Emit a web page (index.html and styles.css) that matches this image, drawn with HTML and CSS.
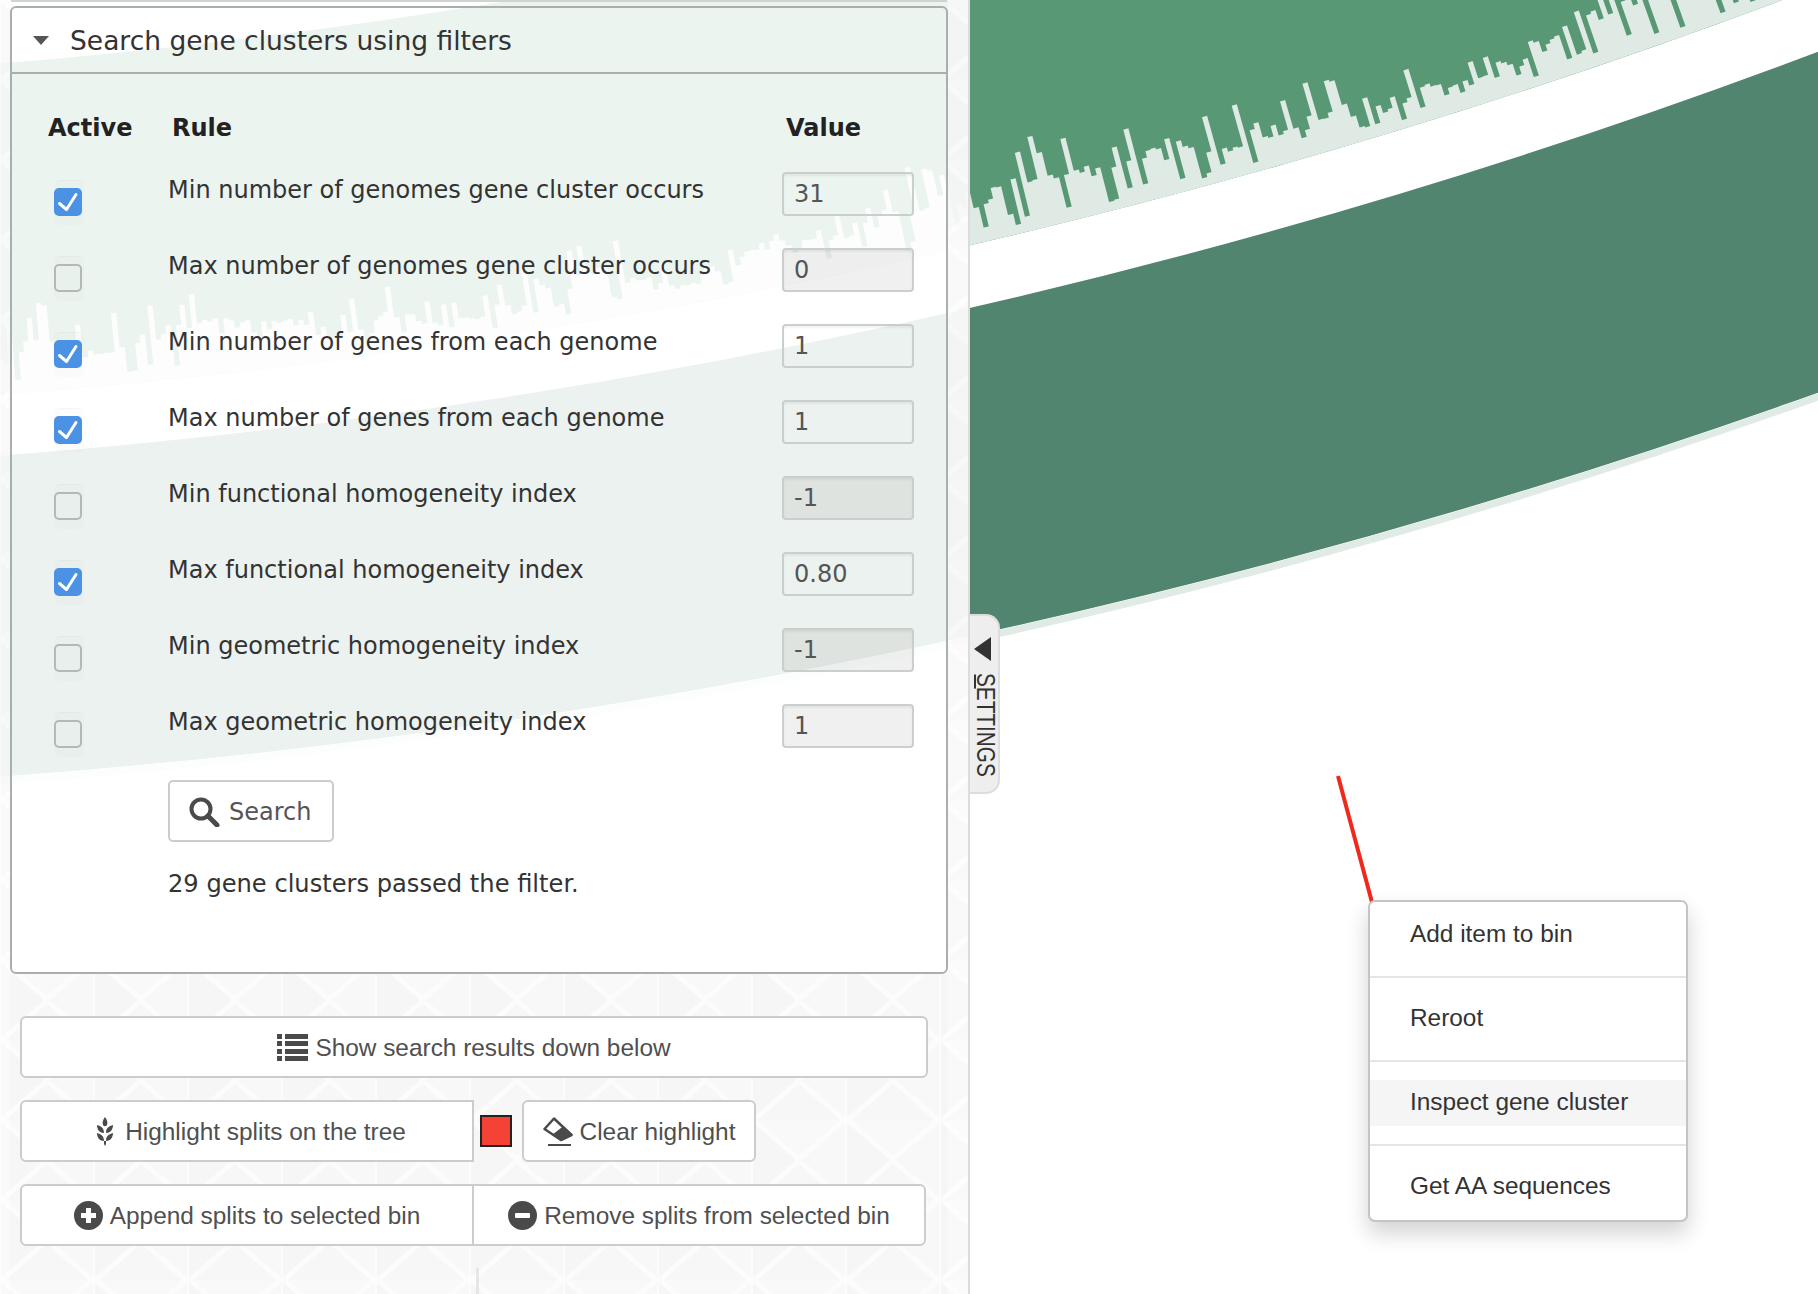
FILE: index.html
```html
<!DOCTYPE html>
<html lang="en">
<head>
  <meta charset="UTF-8" />
  <title>Search gene clusters</title>
  <link rel="stylesheet" href="styles.css">
</head>
<body>
  <!-- tree drawing, the sidebar sits on top of it -->
  <svg class="tree" width="1818" height="1294" viewBox="0 0 1818 1294">
    <circle class="band-a" cx="-503" cy="-6101" r="6350" />
    <path id="hist" class="hist" d="" />
    <circle class="band-b" cx="-503" cy="-6101" r="6736" />
    <circle class="band-b-edge" cx="-503" cy="-6101" r="6900" />
    <line class="branch" x1="1338" y1="776" x2="1373" y2="906" />
  </svg>

  <div class="sidebar">
    <svg class="pattern" width="968" height="1294">
      <defs>
        <pattern id="tri" width="94" height="80" patternUnits="userSpaceOnUse">
          <rect width="94" height="80" fill="#fcfcfc" />
          <polygon points="1,3 44,40 1,77" fill="#f6f6f6" />
          <polygon points="93,3 50,40 93,77" fill="#f8f8f8" />
          <polygon points="6,0 88,0 47,36" fill="#f9f9f9" />
          <polygon points="6,80 88,80 47,44" fill="#f7f7f7" />
        </pattern>
      </defs>
      <rect x="0" y="0" width="10" height="1294" fill="url(#tri)" opacity="0.7" />
      <rect x="948" y="0" width="20" height="1294" fill="url(#tri)" opacity="0.7" />
      <rect x="10" y="974" width="938" height="320" fill="url(#tri)" />
      <rect x="476" y="1268" width="3" height="26" fill="#e6e6e6" />
    </svg>

    <div class="prev-edge"></div>

    <div class="panel">
      <div class="panel-head">
        <span class="caret"></span>
        <span>Search gene clusters using filters</span>
      </div>

      <div class="rules-head">
        <span class="col-active">Active</span>
        <span class="col-rule">Rule</span>
        <span class="col-value">Value</span>
      </div>

      <div class="rule">
        <span class="check on"><svg viewBox="0 0 28 28"><path d="M5.5 15.5l7 6L22 6.5" /></svg></span>
        <label>Min number of genomes gene cluster occurs</label>
        <input type="text" value="31">
      </div>
      <div class="rule">
        <span class="check"></span>
        <label>Max number of genomes gene cluster occurs</label>
        <input type="text" value="0" disabled>
      </div>
      <div class="rule">
        <span class="check on"><svg viewBox="0 0 28 28"><path d="M5.5 15.5l7 6L22 6.5" /></svg></span>
        <label>Min number of genes from each genome</label>
        <input type="text" value="1">
      </div>
      <div class="rule">
        <span class="check on"><svg viewBox="0 0 28 28"><path d="M5.5 15.5l7 6L22 6.5" /></svg></span>
        <label>Max number of genes from each genome</label>
        <input type="text" value="1">
      </div>
      <div class="rule">
        <span class="check"></span>
        <label>Min functional homogeneity index</label>
        <input type="text" value="-1" disabled>
      </div>
      <div class="rule">
        <span class="check on"><svg viewBox="0 0 28 28"><path d="M5.5 15.5l7 6L22 6.5" /></svg></span>
        <label>Max functional homogeneity index</label>
        <input type="text" value="0.80">
      </div>
      <div class="rule">
        <span class="check"></span>
        <label>Min geometric homogeneity index</label>
        <input type="text" value="-1" disabled>
      </div>
      <div class="rule">
        <span class="check"></span>
        <label>Max geometric homogeneity index</label>
        <input type="text" value="1" disabled>
      </div>

      <button class="btn-search">
        <svg class="ico" width="31" height="30" viewBox="0 0 31 30"><circle cx="12" cy="12" r="9.5" fill="none" stroke="#4a4a4a" stroke-width="4" /><path d="M19 19l9 9" stroke="#4a4a4a" stroke-width="5" stroke-linecap="round" /></svg>
        Search
      </button>
      <p class="status">29 gene clusters passed the filter.</p>
    </div>

    <div class="actions">
      <button class="btn btn-wide">
        <svg width="31" height="27" viewBox="0 0 31 27"><path d="M0 0h5v5H0zM8 0h23v5H8zM0 7h5v5H0zM8 7h23v5H8zM0 15h5v5H0zM8 15h23v5H8zM0 22h5v5H0zM8 22h23v5H8z" fill="#4a4a4a" /></svg>
        Show search results down below
      </button>

      <div class="btn-row">
        <button class="btn btn-left btn-highlight">
          <svg width="26" height="29" viewBox="-4 0 26 29"><path d="M9 0c2 3 3 5 2 8-.5 1.500-3.500 1.500-4 0C6 5 7 3 9 0zM1 8c4 1 7 3 7 8-4 0-7-3-7-8zM17 8c-4 1-7 3-7 8 4 0 7-3 7-8zM1 16c4 1 7 3 7 8-4 0-7-3-7-8zM17 16c-4 1-7 3-7 8 4 0 7-3 7-8zM8 24h2v3l-1 2-1-2z" fill="#4a4a4a" /></svg>
          Highlight splits on the tree
        </button>
        <span class="swatch"></span>
        <button class="btn btn-clear">
          <svg width="30" height="29" viewBox="0 0 30 29"><path d="M1.500 12L11 1.500 28.500 18 18 23z" fill="#fff" stroke="#4a4a4a" stroke-width="2.500" stroke-linejoin="round" /><path d="M20.500 9L30 18l-12 6-9-6z" fill="#4a4a4a" /><rect x="5" y="27" width="23" height="2" fill="#4a4a4a" /></svg>
          Clear highlight
        </button>
      </div>

      <div class="btn-row">
        <button class="btn btn-left">
          <svg width="29" height="29" viewBox="0 0 29 29"><circle cx="14.500" cy="14.500" r="14.500" fill="#4a4a4a" /><path d="M12 7h5v5h5v5h-5v5h-5v-5H7v-5h5z" fill="#fff" /></svg>
          Append splits to selected bin
        </button>
        <button class="btn btn-right">
          <svg width="29" height="29" viewBox="0 0 29 29"><circle cx="14.500" cy="14.500" r="14.500" fill="#4a4a4a" /><rect x="7" y="12" width="15" height="5" rx="1" fill="#fff" /></svg>
          Remove splits from selected bin
        </button>
      </div>
    </div>
  </div>

  <div class="settings-tab">
    <span class="arrow"></span>
    <span class="settings-text">SETTINGS</span>
  </div>

  <ul class="menu">
    <li><a>Add item to bin</a></li>
    <li class="divider"></li>
    <li><a>Reroot</a></li>
    <li class="divider"></li>
    <li><a class="hover">Inspect gene cluster</a></li>
    <li class="divider"></li>
    <li><a>Get AA sequences</a></li>
  </ul>

  <script src="script.js"></script>
</body>
</html>
```

FILE: styles.css
```css
body {
  margin: 0;
  width: 1818px;
  height: 1294px;
  overflow: hidden;
  background: white;
  position: relative;
  font-family: "DejaVu Sans", Verdana, sans-serif;
  color: #333;
}

/* tree */
.tree {
  position: absolute;
  left: 0;
  top: 0;
}
.band-a {
  fill: none;
  stroke: #589875;
  stroke-width: 330;
}
.hist {
  fill: #deeae3;
}
.band-b {
  fill: none;
  stroke: #518570;
  stroke-width: 320;
}
.band-b-edge {
  fill: none;
  stroke: #e0ebe6;
  stroke-width: 7;
}
.branch {
  stroke: #ee2a1e;
  stroke-width: 4;
}

/* sidebar */
.sidebar {
  position: relative;
  width: 968px;
  height: 1294px;
  border-right: 2px solid #dcdcdc;
  background: rgba(255, 255, 255, 0.89);
}
.pattern {
  position: absolute;
  left: 0;
  top: 0;
}
.prev-edge {
  position: relative;
  margin-left: 11px;
  width: 936px;
  height: 2px;
  background: #cfd3d1;
}
.panel {
  position: relative;
  box-sizing: border-box;
  margin: 4px 0 0 10px;
  width: 938px;
  height: 968px;
  border: 2px solid #a9afad;
  border-radius: 6px;
}
.panel-head {
  display: flex;
  align-items: center;
  height: 64px;
  border-bottom: 2px solid #a9afad;
  font-size: 26.5px;
}
.caret {
  width: 0;
  height: 0;
  margin: 0 21px 0 21px;
  border-left: 8px solid transparent;
  border-right: 8px solid transparent;
  border-top: 9px solid #555;
}
.rules-head {
  position: relative;
  height: 99px;
  font-size: 24px;
  font-weight: bold;
  color: #222;
}
.rules-head span {
  position: absolute;
  top: 40px;
}
.col-active {
  left: 36px;
}
.col-rule {
  left: 160px;
}
.col-value {
  left: 774px;
}

.rule {
  display: grid;
  grid-template-columns: 156px 1fr 132px;
  height: 76px;
  padding-right: 32px;
  font-size: 24px;
}
.rule label {
  margin-top: 1px;
  line-height: 32px;
}
.rule input {
  box-sizing: border-box;
  width: 132px;
  height: 44px;
  margin: -1px 0 0;
  padding: 0 0 0 10px;
  border: 2px solid #c9cfcd;
  border-radius: 4px;
  background: transparent;
  box-shadow: inset 0 2px 2px rgba(0, 0, 0, 0.05);
  font-family: inherit;
  font-size: 24px;
  color: #555;
}
.rule input:disabled {
  background: rgba(0, 0, 0, 0.06);
  color: #555;
}
.check {
  position: relative;
  box-sizing: border-box;
  width: 28px;
  height: 28px;
  margin: 15px 0 0 42px;
  border: 2px solid #b6bcba;
  border-radius: 5px;
}
.check::before {
  content: "";
  position: absolute;
  left: -2px;
  top: -10px;
  width: 30px;
  height: 44px;
  border-radius: 6px;
  background: rgba(0, 0, 0, 0.012);
  border-top: 1px solid rgba(0, 0, 0, 0.03);
}
.check.on {
  border: none;
  background: #4c94e8;
}
.check.on::before {
  left: 0;
  top: -8px;
}
.check svg {
  position: relative;
  display: block;
  width: 28px;
  height: 28px;
}
.check path {
  fill: none;
  stroke: white;
  stroke-width: 3;
  stroke-linecap: round;
  stroke-linejoin: round;
}

.btn-search {
  display: flex;
  align-items: center;
  gap: 9px;
  box-sizing: border-box;
  height: 62px;
  width: 166px;
  margin: -1px 0 0 156px;
  padding: 2px 0 0 19px;
  border: 2px solid #ccc;
  border-radius: 5px;
  background: white;
  font-family: inherit;
  font-size: 24px;
  color: #555;
}
.status {
  margin: 26px 0 0 156px;
  line-height: 32px;
  font-size: 24.15px;
}

/* buttons below the panel */
.actions {
  position: relative;
  margin: 42px 0 0 20px;
}
.btn {
  display: flex;
  align-items: center;
  justify-content: center;
  gap: 7px;
  box-sizing: border-box;
  height: 62px;
  padding: 1px 0 0;
  border: 2px solid #ccc;
  border-radius: 6px;
  background: white;
  font-family: "Liberation Sans", Arial, sans-serif;
  font-size: 24.4px;
  color: #4f4f4f;
}
.btn svg {
  margin-top: -1px;
}
.btn-wide {
  width: 908px;
}
.btn-row {
  display: flex;
  align-items: center;
  margin-top: 22px;
}
.btn-left {
  width: 454px;
  border-radius: 6px 0 0 6px;
}
.btn-highlight {
  padding-left: 4px;
}
.btn-right {
  width: 454px;
  margin-left: -2px;
  border-radius: 0 6px 6px 0;
}
.btn-clear {
  width: 234px;
}
.swatch {
  box-sizing: border-box;
  width: 32px;
  height: 32px;
  margin: 0 10px 0 6px;
  border: 2px solid #222;
  background: #f44336;
}

/* settings tab */
.settings-tab {
  position: absolute;
  left: 970px;
  top: 614px;
  box-sizing: border-box;
  width: 30px;
  height: 180px;
  background: #eee;
  border: 2px solid #ddd;
  border-left: none;
  border-radius: 0 14px 14px 0;
}
.arrow {
  position: absolute;
  left: 4px;
  top: 21px;
  width: 0;
  height: 0;
  border-top: 12px solid transparent;
  border-bottom: 12px solid transparent;
  border-right: 17px solid #333;
}
.settings-text {
  position: absolute;
  left: 2px;
  top: 57px;
  width: 27px;
  line-height: 27px;
  writing-mode: vertical-rl;
  transform: scaleY(0.78);
  transform-origin: top;
  font-family: "Liberation Sans", Arial, sans-serif;
  font-size: 26.6px;
  color: #333;
}
.settings-text::before {
  content: "";
  position: absolute;
  left: 2px;
  top: 2px;
  width: 2px;
  height: 18px;
  background: #333;
}

/* context menu */
.menu {
  position: absolute;
  left: 1368px;
  top: 900px;
  box-sizing: border-box;
  width: 320px;
  height: 322px;
  margin: 0;
  padding: 10px 0;
  list-style: none;
  background: white;
  border: 2px solid #c4c4c4;
  border-radius: 7px;
  box-shadow: 0 11px 22px rgba(0, 0, 0, 0.18);
  font-family: "Liberation Sans", Arial, sans-serif;
  font-size: 24.4px;
  color: #333;
}
.menu a {
  display: block;
  height: 46px;
  padding-left: 40px;
  line-height: 43px;
}
.menu a.hover {
  background: #f5f5f5;
}
.menu .divider {
  height: 2px;
  margin: 18px 0;
  background: #e5e5e5;
}
```

FILE: script.js
```js
// coverage histogram of the outer layer, bars stand on a circle
var cx = -503, cy = -6101, outer = 6515;
var start = 0.07, end = 0.37, step = 0.00082;

// seeded so the picture stays the same
var seed = 4217;
function rnd() {
  seed = (seed * 1103515245 + 12345) % 2147483648;
  return seed / 2147483648;
}

function pt(r, a) {
  return (cx + r * Math.sin(a)).toFixed(1) + " " + (cy + r * Math.cos(a)).toFixed(1);
}

var upper = [], lower = [];
var level = 36;
for (var a = start; a < end; a += step) {
  level += (rnd() - 0.5) * 16;
  level = Math.max(22, Math.min(50, level));
  var h = level + (rnd() - 0.5) * 12;
  var r = rnd();
  if (r < 0.13) h = 8 + rnd() * 14;
  else if (r < 0.3) h = level + 12 + rnd() * 30;
  upper.push(pt(outer - h, a), pt(outer - h, a + step));
  lower.unshift(pt(outer, a));
}
lower.unshift(pt(outer, end));

document.getElementById("hist").setAttribute("d", "M" + upper.concat(lower).join("L") + "Z");
```
